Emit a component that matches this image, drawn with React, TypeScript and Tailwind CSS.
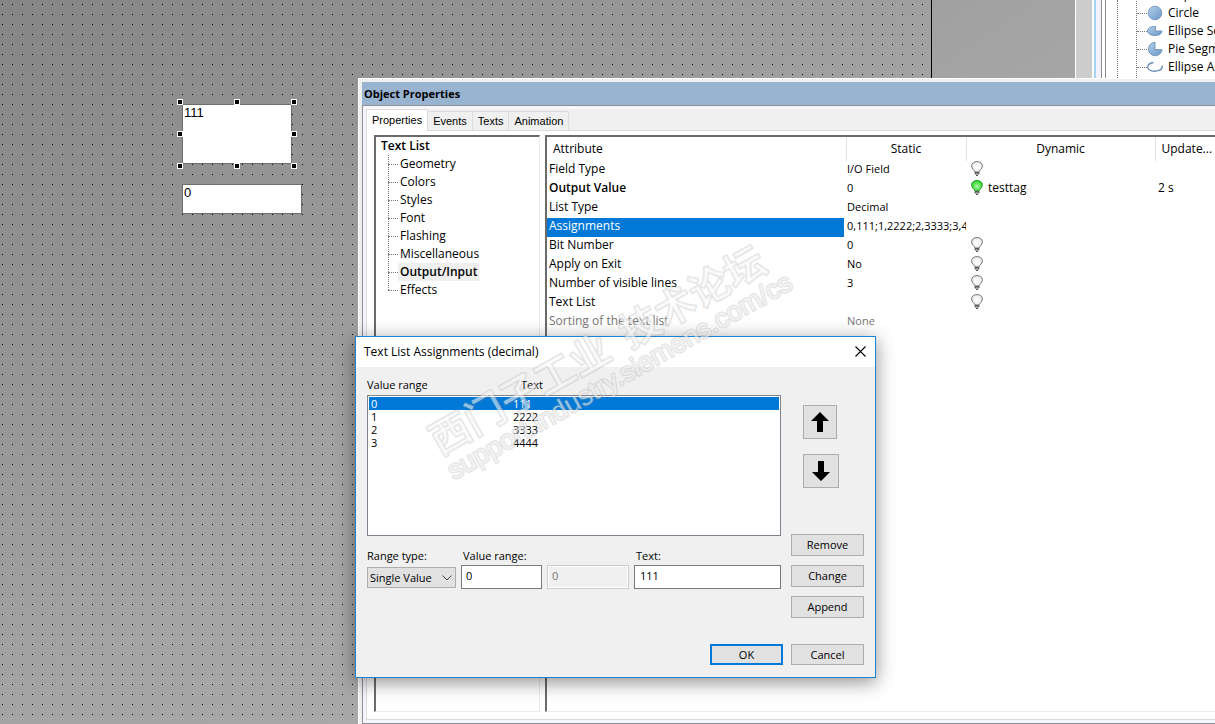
import { useState } from "react";

const shapes = ["Ellipse", "Circle", "Ellipse Segment", "Pie Segment", "Ellipse Arc"];

const categories = [
  "Geometry",
  "Colors",
  "Styles",
  "Font",
  "Flashing",
  "Miscellaneous",
  "Output/Input",
  "Effects",
];

const tabs = ["Properties", "Events", "Texts", "Animation"];

type Attribute = {
  name: string;
  value: string;
  bulb?: "off" | "on";
  dynamic?: string;
  update?: string;
  bold?: boolean;
  disabled?: boolean;
};

const attributes: Attribute[] = [
  { name: "Field Type", value: "I/O Field", bulb: "off" },
  { name: "Output Value", value: "0", bulb: "on", dynamic: "testtag", update: "2 s", bold: true },
  { name: "List Type", value: "Decimal" },
  { name: "Assignments", value: "0,111;1,2222;2,3333;3,4444" },
  { name: "Bit Number", value: "0", bulb: "off" },
  { name: "Apply on Exit", value: "No", bulb: "off" },
  { name: "Number of visible lines", value: "3", bulb: "off" },
  { name: "Text List", value: "", bulb: "off" },
  { name: "Sorting of the text list", value: "None", disabled: true },
];

const assignments = [
  { range: "0", text: "111" },
  { range: "1", text: "2222" },
  { range: "2", text: "3333" },
  { range: "3", text: "4444" },
];

const handles = [
  "-left-1.5 -top-1.5",
  "left-1/2 -top-1.5 -translate-x-1/2",
  "-right-1.5 -top-1.5",
  "-left-1.5 top-1/2 -translate-y-1/2",
  "-right-1.5 top-1/2 -translate-y-1/2",
  "-left-1.5 -bottom-1.5",
  "left-1/2 -bottom-1.5 -translate-x-1/2",
  "-right-1.5 -bottom-1.5",
];

function Bulb({ on }: { on: boolean }) {
  return (
    <svg width="12" height="16" viewBox="0 0 12 16" className="shrink-0">
      <defs>
        <radialGradient id={on ? "bulb-on" : "bulb-off"} cx="50%" cy="55%" r="60%">
          <stop offset="0" stopColor={on ? "#b4f5b0" : "#ffffff"} />
          <stop offset="1" stopColor={on ? "#12d312" : "#e8e8e8"} />
        </radialGradient>
      </defs>
      <path
        d="M4 11 C4 9.5 .6 8 .6 4.9 C.6 2.2 3 .6 6 .6 S11.4 2.2 11.4 4.9 C11.4 8 8 9.5 8 11 Z"
        fill={on ? "url(#bulb-on)" : "url(#bulb-off)"}
        stroke={on ? "#2d9c2d" : "#777"}
      />
      <path d="M4 11.5h4v1.500h-4zM5 14.500h2" fill="#ccc" stroke="#555" />
    </svg>
  );
}

function ShapeIcon({ name }: { name: string }) {
  return (
    <svg width="16" height="16" viewBox="0 0 16 16" className="shrink-0">
      <defs>
        <linearGradient id="shape" x1="0" y1="0" x2="1" y2="1">
          <stop offset="0" stopColor="#b3cfea" />
          <stop offset="1" stopColor="#6c98c8" />
        </linearGradient>
      </defs>
      {name === "Ellipse" && <ellipse cx="8" cy="8" rx="6.5" ry="4.5" fill="#dadada" stroke="#aaa" />}
      {name === "Circle" && <circle cx="8" cy="8" r="6.8" fill="url(#shape)" stroke="#6689b3" strokeWidth=".8" />}
      {name === "Ellipse Segment" && (
        <path
          d="M8.5 3.5C3 3.3.6 5.5.6 8S3.5 12.5 8 12.5 15 10.5 15 8H8.5Z"
          fill="url(#shape)"
          stroke="#6689b3"
          strokeWidth=".8"
        />
      )}
      {name === "Pie Segment" && (
        <path d="M8 1.2A6.8 6.8 0 1 0 15 8.6H8Z" fill="url(#shape)" stroke="#6689b3" strokeWidth=".8" />
      )}
      {name === "Ellipse Arc" && (
        <path
          d="M6.5 3.5C-.5 4.5-1 10 4.5 11.8C9 13 16.5 11.5 15 6.5"
          fill="none"
          stroke="#6a8cb8"
          strokeWidth="1.3"
        />
      )}
    </svg>
  );
}

function Arrow({ down = false }: { down?: boolean }) {
  return (
    <svg width="18" height="20" viewBox="0 0 18 20" className={down ? "rotate-180" : ""}>
      <path d="M9 0L18 9H12V20H6V9H0Z" />
    </svg>
  );
}

function Editor() {
  return (
    <div className="flex flex-1 bg-linear-to-br from-[#858585] via-[#a4a4a4] to-[#b0b0b0]">
      <div className="relative mr-[143px] flex-1 border-r border-black">
        <svg className="absolute inset-0 size-full">
          <defs>
            <pattern id="grid" width="10" height="10" patternUnits="userSpaceOnUse">
              <rect x="2" y="4" width="1" height="1" />
            </pattern>
          </defs>
          <rect width="100%" height="100%" fill="url(#grid)" />
        </svg>
        <div className="absolute left-[182px] top-[104px] h-[60px] w-[110px] border border-[#6e6e6e] bg-white pl-px font-['Liberation_Sans',sans-serif] text-[13px] leading-4">
          111
          {handles.map((position) => (
            <span key={position} className={`absolute size-1.5 border border-white bg-black ${position}`} />
          ))}
        </div>
        <div className="absolute left-[182px] top-[184px] h-[30px] w-[120px] border border-[#6e6e6e] bg-white pl-px font-['Liberation_Sans',sans-serif] text-[13px] leading-4">
          0
        </div>
      </div>
    </div>
  );
}

function ObjectPalette() {
  return (
    <aside className="flex w-[140px] shrink-0 overflow-hidden border-l border-white bg-white">
      <div className="w-4 shrink-0 bg-[#cdcdcd]" />
      <div className="ml-0.5 w-0.5 shrink-0 bg-[#a6d3f0]" />
      <div className="w-1.5 shrink-0 border-r border-[#8c8c94] bg-[#f2f2fa]" />
      <div className="ml-[3px] w-px shrink-0 bg-[#8c8c94]" />
      <div className="ml-[11px] shrink-0 border-l border-dotted border-[#777]" />
      <ul className="-mt-[14px] ml-[18px] shrink-0 border-l border-dotted border-[#777]">
        {shapes.map((shape) => (
          <li key={shape} className="flex h-[18px] items-center whitespace-nowrap">
            <span className="w-2.5 shrink-0 border-t border-dotted border-[#777]" />
            <ShapeIcon name={shape} />
            <span className="ml-[5px]">{shape}</span>
          </li>
        ))}
      </ul>
    </aside>
  );
}

function CategoryTree() {
  return (
    <nav className="w-[166px] shrink-0 border-2 border-b border-r border-[#6b6b6b] border-b-[#ececec] border-r-[#ececec] bg-white">
      <p className="h-[18px] pl-[5px] font-semibold leading-[18px]">Text List</p>
      <div className="relative ml-3">
        <span className="absolute bottom-[9px] left-0 top-0 border-l border-dotted border-[#777]" />
        <ul>
          {categories.map((category) => (
            <li key={category} className="flex h-[18px] items-center">
              <span className="w-2.5 border-t border-dotted border-[#777]" />
              <span
                className={`px-0.5 leading-[18px] ${category === "Output/Input" ? "bg-[#efefef] font-semibold" : ""}`}
              >
                {category}
              </span>
            </li>
          ))}
        </ul>
      </div>
    </nav>
  );
}

function AttributeTable() {
  return (
    <div className="flex-1 overflow-hidden border-2 border-b border-r-0 border-[#6b6b6b] border-b-[#ececec] bg-white">
      <table className="w-full table-fixed border-collapse whitespace-nowrap">
        <colgroup>
          <col className="w-[299px]" />
          <col className="w-[120px]" />
          <col className="w-[189px]" />
          <col />
        </colgroup>
        <thead>
          <tr className="h-6">
            <th className="border-r border-[#e2e2e2] pl-1.5 text-left font-normal">Attribute</th>
            <th className="border-r border-[#e2e2e2] font-normal">Static</th>
            <th className="border-r border-[#e2e2e2] font-normal">Dynamic</th>
            <th className="pl-1.5 text-left font-normal">Update...</th>
          </tr>
        </thead>
        <tbody>
          {attributes.map((row) => (
            <tr key={row.name} className={`h-[19px] leading-4 ${row.disabled ? "text-[#777]" : ""}`}>
              <td className="p-0 pr-0.5">
                <div
                  className={`h-[19px] pl-0.5 ${row.bold ? "font-semibold" : ""} ${
                    row.name === "Assignments" ? "bg-[#0078d7] text-white" : ""
                  }`}
                >
                  {row.name}
                </div>
              </td>
              <td className="overflow-hidden p-0 pl-px align-top text-[11px]">{row.value}</td>
              <td className="p-0 pl-[5px] align-top">
                <div className="flex items-center gap-[5px]">
                  {row.bulb && <Bulb on={row.bulb === "on"} />}
                  {row.dynamic}
                </div>
              </td>
              <td className="p-0 pl-[3px] align-top">{row.update}</td>
            </tr>
          ))}
        </tbody>
      </table>
    </div>
  );
}

function ObjectProperties() {
  const [active, setActive] = useState("Properties");

  return (
    <section className="absolute bottom-0 left-[358px] right-0 top-[78px] flex flex-col border-l border-t border-white bg-[#f0f0f0] pl-[3px] pt-[3px]">
      <h1 className="h-6 border-b border-[#8e8e98] bg-[#99b4d1] pl-0.5 text-[11px] font-bold leading-6">
        Object Properties
      </h1>
      <div className="flex flex-1 flex-col border-b border-l border-[#8e8e98] bg-[#f4f6fb] pb-[3px] pl-[3px] pt-[3px]">
        <div
          role="tablist"
          className="flex h-[21px] items-end bg-[#f0f0f0] font-['Liberation_Sans',sans-serif] text-[11px]"
        >
          {tabs.map((tab) => (
            <button
              key={tab}
              role="tab"
              aria-selected={tab === active}
              onClick={() => setActive(tab)}
              className={
                tab === active
                  ? "z-10 -mb-px h-[22px] border border-b-0 border-[#dcdcdc] bg-white px-[5px] pb-0.5"
                  : "h-[19px] border border-b-0 border-l-0 border-[#dcdcdc] px-[5px]"
              }
            >
              {tab}
            </button>
          ))}
        </div>
        <div className="flex flex-1 gap-[5px] border border-r-0 border-[#dcdcdc] bg-white pb-[7px] pl-[7px] pt-1">
          <CategoryTree />
          <AttributeTable />
        </div>
      </div>
    </section>
  );
}

function AssignmentsDialog() {
  const [selected, setSelected] = useState(0);
  const button = "h-[22px] w-full border border-[#adadad] bg-[#e1e1e1] text-center";

  return (
    <section
      role="dialog"
      aria-labelledby="dialog-title"
      className="absolute left-[355px] top-[336px] w-[521px] border border-[#1883d7] bg-[#f0f0f0] shadow-[0_4px_18px_rgba(0,0,0,0.45)]"
    >
      <header className="flex h-[30px] items-center justify-between bg-white px-2 text-[12px]">
        <h2 id="dialog-title">Text List Assignments (decimal)</h2>
        <button aria-label="Close" className="px-px pb-0.5">
          <svg width="11" height="11" viewBox="0 0 11 11" stroke="#000" strokeWidth="1.1">
            <path d="M.5 .5L10.5 10.5M10.5 .5L.5 10.5" />
          </svg>
        </button>
      </header>

      <div className="flex gap-2.5 px-[11px] pb-3 pt-2.5 text-[11px]">
        <div className="flex-1">
          <div className="flex h-[18px] leading-4">
            <span className="w-[154px]">Value range</span>
            <span>Text</span>
          </div>
          <ul role="listbox" className="h-[141px] border border-[#7f8490] bg-white p-px">
            {assignments.map((item, i) => (
              <li
                key={item.range}
                role="option"
                aria-selected={i === selected}
                onClick={() => setSelected(i)}
                className={`flex h-[13px] pl-0.5 leading-[13px] ${i === selected ? "bg-[#0078d7] text-white" : ""}`}
              >
                <span className="w-[142px]">{item.range}</span>
                <span>{item.text}</span>
              </li>
            ))}
          </ul>

          <div className="mt-3 flex items-end gap-[5px]">
            <div className="w-[89px]">
              <label htmlFor="range-type" className="block h-[17px] leading-4">Range type:</label>
              <div className="relative pb-px pt-0.5">
                <select
                  id="range-type"
                  className="block h-[21px] w-full appearance-none border border-[#adadad] bg-[#e1e1e1] pl-0.5"
                >
                  <option>Single Value</option>
                </select>
                <svg width="10" height="6" viewBox="0 0 10 6" className="pointer-events-none absolute right-1 top-2.5">
                  <path d="M.5 .5L5 5L9.5 .5" fill="none" stroke="#444" />
                </svg>
              </div>
            </div>
            <div className="w-[81px]">
              <label htmlFor="range-from" className="block h-[17px] pl-0.5 leading-4">Value range:</label>
              <input
                id="range-from"
                defaultValue="0"
                className="block h-6 w-full border border-[#7a7a7a] bg-white pb-[3px] pl-1"
              />
            </div>
            <input
              aria-label="Value range end"
              defaultValue="0"
              disabled
              className="block h-6 w-[82px] border border-[#ccc] bg-[#f0f0f0] pb-[3px] pl-1 text-[#777] shadow-[inset_0_0_0_1px_#fff]"
            />
            <div className="flex-1">
              <label htmlFor="range-text" className="block h-[17px] pl-0.5 leading-4">Text:</label>
              <input
                id="range-text"
                defaultValue="111"
                className="block h-6 w-full border border-[#7a7a7a] bg-white pb-[3px] pl-[5px]"
              />
            </div>
          </div>
        </div>

        <div className="flex w-[73px] flex-col">
          <button
            aria-label="Move up"
            className="ml-3 mt-7 flex size-[34px] items-center justify-center border border-[#adadad] bg-[#e1e1e1]"
          >
            <Arrow />
          </button>
          <button
            aria-label="Move down"
            className="ml-3 mt-[15px] flex h-[34px] w-9 items-center justify-center border border-[#adadad] bg-[#e1e1e1]"
          >
            <Arrow down />
          </button>
          <div className="mt-[46px] flex flex-col gap-[9px]">
            <button className={button}>Remove</button>
            <button className={button}>Change</button>
            <button className={button}>Append</button>
          </div>
        </div>
      </div>

      <footer className="flex justify-end gap-2 px-[11px] pb-3 pt-3.5 text-[11px]">
        <button className="h-[21px] w-[73px] border-2 border-[#0078d7] bg-[#e1e1e1]">OK</button>
        <button className="h-[21px] w-[73px] border border-[#adadad] bg-[#e1e1e1]">Cancel</button>
      </footer>
    </section>
  );
}

function Watermark() {
  return (
    <svg
      width="400"
      height="270"
      className="pointer-events-none absolute left-[410px] top-[230px]"
      fill="#fff"
      fillOpacity=".55"
      stroke="#888"
      strokeOpacity=".22"
      strokeWidth="2.5"
      strokeLinejoin="round"
      paintOrder="stroke"
    >
      <g transform="translate(30 226) rotate(-29.5)">
        <g fontFamily="'Noto Sans CJK SC', sans-serif" fontSize="40" fontWeight="500">
          <text>西门子工业</text>
          <text x="218">技术论坛</text>
        </g>
        <text x="0" y="28" fontFamily="'Liberation Sans', sans-serif" fontSize="27">
          support.industry.siemens.com/cs
        </text>
      </g>
    </svg>
  );
}

export default function App() {
  return (
    <main className="relative flex min-h-screen overflow-hidden font-['Open_Sans',sans-serif] text-[12px] leading-4 text-black">
      <Editor />
      <ObjectPalette />
      <ObjectProperties />
      <AssignmentsDialog />
      <Watermark />
    </main>
  );
}
